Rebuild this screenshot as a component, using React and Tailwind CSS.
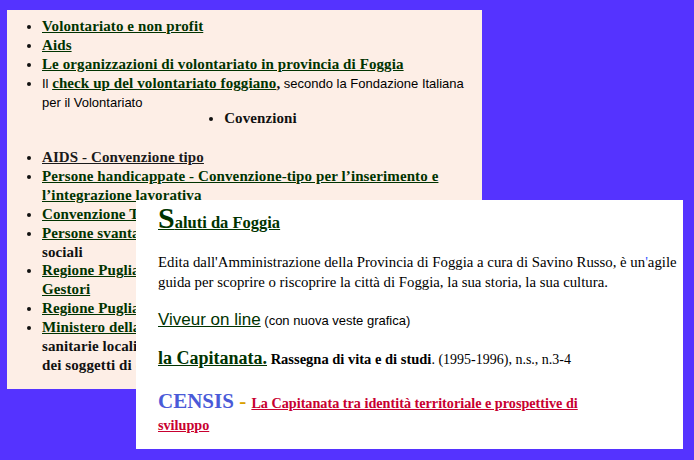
import React from "react";

function L({ children, className = "" }) {
  return <a className={"underline text-[#003300] " + className}>{children}</a>;
}

const SANS = "font-['Liberation_Sans',Arial,sans-serif]";

export default function App() {
  return (
    <div className="relative w-[694px] h-[460px] bg-[#5533ff] overflow-hidden font-['Liberation_Serif','Times_New_Roman',serif]">
      {/* Panel 1 */}
      <div className="absolute left-[7px] top-[10px] w-[475px] h-[379px] bg-[#fdeee6] overflow-hidden pt-[7px] tracking-[0.1px]">
        <ul className="list-disc pl-[35px] text-[15px] leading-[19px] font-bold text-[#111]">
          <li><L>Volontariato e non profit</L></li>
          <li><L>Aids</L></li>
          <li><L>Le organizzazioni di volontariato in provincia di Foggia</L></li>
          <li className="leading-[18px]">
            <span className={"font-normal text-[13px] text-black tracking-normal " + SANS}>Il </span>
            <L>check up del volontariato foggiano</L>,
            <span className={"font-normal text-[13px] text-black tracking-normal " + SANS}> secondo la Fondazione Italiana<br />per il Volontariato</span>
          </li>
        </ul>
        <div className="flex justify-center pl-[32px] mt-[-2px]">
          <ul className="list-disc text-[15px] leading-[17px] font-bold text-[#111]">
            <li>Covenzioni</li>
          </ul>
        </div>
        <ul className="list-disc pl-[35px] mt-[21px] text-[15px] leading-[18.9px] font-bold text-[#111] whitespace-nowrap">
          <li><a className="underline text-[#1a1a1a]">AIDS - Convenzione tipo</a></li>
          <li><L>Persone handicappate - Convenzione-tipo per l&#8217;inserimento e<br />l&#8217;integrazione lavorativa</L></li>
          <li><L>Convenzione Tipo per le cooperative sociali</L></li>
          <li><L>Persone svantaggiate - Convenzione-tipo con le cooperative</L><br />sociali</li>
          <li><L>Regione Puglia - Albo regionale dei Soggetti<br />Gestori</L></li>
          <li><L>Regione Puglia - Legge regionale sul volontariato</L></li>
          <li><L>Ministero della Sanit&agrave; - Rapporti tra le aziende</L><br />sanitarie locali e le organizzazioni di volontariato<br />dei soggetti di diritto privato</li>
        </ul>
      </div>

      {/* Panel 2 */}
      <div className="absolute left-[136px] top-[200px] w-[547px] h-[249px] bg-white pl-[22px] pt-[1px] flex flex-col">
        <div className="leading-[34px] font-bold">
          <L><span className="text-[30px]">S</span><span className="text-[16.5px]">aluti da Foggia</span></L>
        </div>
        <p className="mt-[12px] text-[14.8px] leading-[20px] text-black pr-[2px]">
          Edita dall'Amministrazione della Provincia di Foggia a cura di Savino Russo, è un<span className="text-[#3355ff]">'</span>agile guida per scoprire o riscoprire la città di Foggia, la sua storia, la sua cultura.
        </p>
        <div className={"mt-[18px] leading-[20px] " + SANS}>
          <L className="text-[17px]">Viveur on line</L>
          <span className="text-[13px] text-black"> (con nuova veste grafica)</span>
        </div>
        <div className="mt-[16px] leading-[22px] text-black">
          <L className="text-[18px] font-bold">la Capitanata.</L>
          <span className="text-[14.5px] font-bold"> Rassegna di vita e di studi</span>
          <span className="text-[14px]">. (1995-1996), n.s., n.3-4</span>
        </div>
        <div className="mt-[20px] leading-[21px] pr-[60px]">
          <span className="text-[21px] leading-[21px] font-bold text-[#4a5ad8]">CENSIS</span>
          <span className="text-[21px] leading-[21px] font-bold text-[#d9a000]"> - </span>
          <a className="underline text-[14.2px] leading-[21px] font-bold text-[#c80030]">La Capitanata tra identità territoriale e prospettive di sviluppo</a>
        </div>
      </div>
    </div>
  );
}
